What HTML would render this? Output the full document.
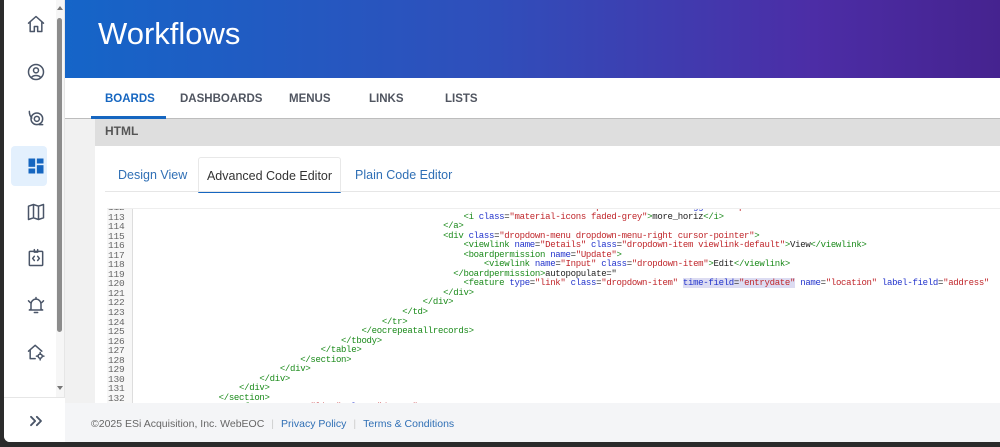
<!DOCTYPE html>
<html><head><meta charset="utf-8"><style>
*{margin:0;padding:0;box-sizing:border-box}
body{width:1000px;height:447px;overflow:hidden;background:#2b2b2b;font-family:"Liberation Sans",Arial,sans-serif;position:relative}
#side{position:absolute;left:4px;top:0;width:61px;height:442px;background:#fff;border-bottom-left-radius:6px;border-right:1px solid #e6e6e6}
.ic{position:absolute;left:22px;width:20px;height:20px}
.ic svg{width:20px;height:20px;fill:none;stroke:#4a5568;stroke-width:1.8;stroke-linejoin:round;stroke-linecap:round}
#sel{position:absolute;left:7px;top:146px;width:36px;height:40px;background:#e3f0fd;border-radius:4px}
#track{position:absolute;left:52px;top:0;width:8px;height:397px;background:#f6f6f6}
#thumb{position:absolute;left:53px;top:18px;width:5px;height:314px;background:#8c8c8c;border-radius:3px}
#main{position:absolute;left:65px;top:0;width:935px;height:442px;background:#f1f1f1}
#hdr{position:absolute;left:0;top:0;width:935px;height:78px;background:linear-gradient(90deg,#1565c8 0%,#2f4fbb 45%,#4c2da6 80%,#45238f 100%)}
#hdr h1{position:absolute;left:33px;top:16px;color:#fff;font-weight:400;font-size:31px}
#nav{position:absolute;left:0;top:78px;width:935px;height:41px;background:#fff;border-bottom:1px solid #bdbdbd}
#nav span{position:absolute;top:15px;font-size:11.5px;font-weight:700;color:#505560}
#htmlbar{position:absolute;left:30px;top:119px;width:905px;height:27px;background:#dedede;font-weight:700;font-size:12px;color:#555;padding:5px 10px}
#panel{position:absolute;left:30px;top:146px;width:905px;height:260px;background:#fff}
.tab{position:absolute;top:11px;height:36px;font-size:12.5px;color:#2f6fb5;padding-top:11px}
#code{position:absolute;left:12px;top:62px;width:893px;height:195px;overflow:hidden;background:#fff;border-top:1px solid #eee}
#gut{position:absolute;left:0;top:0;width:26px;height:200px;background:#f7f7f7;border-right:1px solid #ddd}
pre{font-family:"Liberation Mono",monospace;font-size:9px;letter-spacing:-0.3px;line-height:9.55px;position:absolute;top:-6px;color:#222}
#gut pre{left:1px;color:#666;font-size:9.5px;letter-spacing:-0.2px}
#src pre{left:30px}
.g{color:#1a8a1a}.b{color:#2233cc}.r{color:#c0262b}.h{background:#dcdcf2}
#foot{position:absolute;left:65px;top:403px;width:935px;height:39px;background:#f4f5f7;font-size:10.5px;color:#666;display:flex;align-items:center;padding-left:26px;padding-top:3px}
#foot .s{color:#ccc;margin:0 7px}
#foot a{color:#2f6fb5;text-decoration:none}
#sbot{position:absolute;left:4px;top:397px;width:61px;height:45px;border-top:1px solid #e6e6e6;background:#fff;border-bottom-left-radius:6px}
</style></head><body>
<div id="main">
<div id="hdr"><h1>Workflows</h1></div>
<div id="nav">
<span style="left:40px;color:#1666c0">BOARDS</span>
<div style="position:absolute;left:26px;top:38px;width:75px;height:3px;background:#1666c0"></div>
<span style="left:115px">DASHBOARDS</span>
<span style="left:224px">MENUS</span>
<span style="left:304px">LINKS</span>
<span style="left:380px">LISTS</span>
</div>
<div id="htmlbar">HTML</div>
<div id="panel">
<div class="tab" style="left:23px">Design View</div>
<div class="tab" style="left:103px;width:143px;border:1px solid #e8e8e8;border-bottom:2px solid #1666c0;border-radius:3px 3px 0 0;color:#333;text-align:center">Advanced Code Editor</div>
<div class="tab" style="left:260px">Plain Code Editor</div>
<div style="position:absolute;left:10px;top:45px;width:895px;height:1px;background:#e6e6e6"></div>
<div id="code">
<div id="gut"><pre>112
113
114
115
116
117
118
119
120
121
122
123
124
125
126
127
128
129
130
131
132
133</pre></div>
<div id="src"><pre>                                                            <span class="g">&lt;a</span> <span class="b">class</span>=<span class="r">"custom-link d-block print-hide"</span> <span class="b">data-toggle</span>=<span class="r">"dropdown"</span><span class="g">&gt;</span>
                                                                <span class="g">&lt;i</span> <span class="b">class</span>=<span class="r">"material-icons faded-grey"</span><span class="g">&gt;</span>more_horiz<span class="g">&lt;/i&gt;</span>
                                                            <span class="g">&lt;/a&gt;</span>
                                                            <span class="g">&lt;div</span> <span class="b">class</span>=<span class="r">"dropdown-menu dropdown-menu-right cursor-pointer"</span><span class="g">&gt;</span>
                                                                <span class="g">&lt;viewlink</span> <span class="b">name</span>=<span class="r">"Details"</span> <span class="b">class</span>=<span class="r">"dropdown-item viewlink-default"</span><span class="g">&gt;</span>View<span class="g">&lt;/viewlink&gt;</span>
                                                                <span class="g">&lt;boardpermission</span> <span class="b">name</span>=<span class="r">"Update"</span><span class="g">&gt;</span>
                                                                    <span class="g">&lt;viewlink</span> <span class="b">name</span>=<span class="r">"Input"</span> <span class="b">class</span>=<span class="r">"dropdown-item"</span><span class="g">&gt;</span>Edit<span class="g">&lt;/viewlink&gt;</span>
                                                              <span class="g">&lt;/boardpermission&gt;</span>autopopulate="
                                                                <span class="g">&lt;feature</span> <span class="b">type</span>=<span class="r">"link"</span> <span class="b">class</span>=<span class="r">"dropdown-item"</span> <span class="h"><span class="b">time-field</span>=<span class="r">"entrydate"</span></span> <span class="b">name</span>=<span class="r">"location"</span> <span class="b">label-field</span>=<span class="r">"address"</span>
                                                            <span class="g">&lt;/div&gt;</span>
                                                        <span class="g">&lt;/div&gt;</span>
                                                    <span class="g">&lt;/td&gt;</span>
                                                <span class="g">&lt;/tr&gt;</span>
                                            <span class="g">&lt;/eocrepeatallrecords&gt;</span>
                                        <span class="g">&lt;/tbody&gt;</span>
                                    <span class="g">&lt;/table&gt;</span>
                                <span class="g">&lt;/section&gt;</span>
                            <span class="g">&lt;/div&gt;</span>
                        <span class="g">&lt;/div&gt;</span>
                    <span class="g">&lt;/div&gt;</span>
                <span class="g">&lt;/section&gt;</span>
                    <span class="g">&lt;feature</span> <span class="b">type</span>=<span class="r">"list"</span> <span class="b">class</span>=<span class="r">"d-none"</span></pre></div>
</div>
</div>
</div>
<div id="foot">
<span>©2025 ESi Acquisition, Inc. WebEOC</span><span class="s">|</span><a>Privacy Policy</a><span class="s">|</span><a>Terms &amp; Conditions</a>
</div>
<div id="side">
<div id="track"></div><div id="thumb"></div>
<div style="position:absolute;left:53px;top:6px;width:0;height:0;border:3px solid transparent;border-bottom:4px solid #777;border-top:0"></div>
<div style="position:absolute;left:53px;top:386px;width:0;height:0;border:3px solid transparent;border-top:4px solid #777;border-bottom:0"></div>
<div id="sel"></div>
<div class="ic" style="top:14px"><svg viewBox="0 0 24 24"><path d="M3 11L12 3l9 8M5 9.5V21h5v-6h4v6h5V9.5"/></svg></div>
<div class="ic" style="top:62px"><svg viewBox="0 0 24 24"><circle cx="12" cy="12" r="9"/><circle cx="12" cy="10" r="3"/><path d="M6.5 18.5c3-3 8-3 11 0"/></svg></div>
<div class="ic" style="top:108px"><svg viewBox="0 0 24 24"><circle cx="13" cy="13" r="7"/><circle cx="13" cy="13" r="3"/><path d="M4 4c0 4 1 6 3 8M20 20h-4"/></svg></div>
<div class="ic" style="top:156px"><svg viewBox="0 0 24 24" style="fill:#1666c0;stroke:none"><rect x="3" y="3" width="8" height="10"/><rect x="13" y="3" width="8" height="6"/><rect x="3" y="15" width="8" height="6"/><rect x="13" y="11" width="8" height="10"/></svg></div>
<div class="ic" style="top:202px"><svg viewBox="0 0 24 24"><path d="M3 5l6-2 6 2 6-2v16l-6 2-6-2-6 2zM9 3v16M15 5v16"/></svg></div>
<div class="ic" style="top:248px"><svg viewBox="0 0 24 24"><rect x="4" y="4" width="16" height="17" rx="1"/><path d="M10 2v3h4V2M10 10l-2 2.5 2 2.5M14 10l2 2.5-2 2.5"/></svg></div>
<div class="ic" style="top:295px"><svg viewBox="0 0 24 24"><path d="M6 17V11a6 6 0 0112 0v6l2 1H4zM10 21h4M12 3v2M3 7l2 2M21 7l-2 2"/></svg></div>
<div class="ic" style="top:342px"><svg viewBox="0 0 24 24"><path d="M3 11l8-7 8 7M5 9.5V20h6"/><circle cx="17" cy="17" r="2.5"/><path d="M17 12.5v2M17 19.5v2M12.5 17h2M19.5 17h2"/></svg></div>
</div>
<div id="sbot"><div class="ic" style="top:13px"><svg viewBox="0 0 24 24" style="stroke-width:2.2"><path d="M6 7l5 5-5 5M13 7l5 5-5 5"/></svg></div></div>
</body></html>
